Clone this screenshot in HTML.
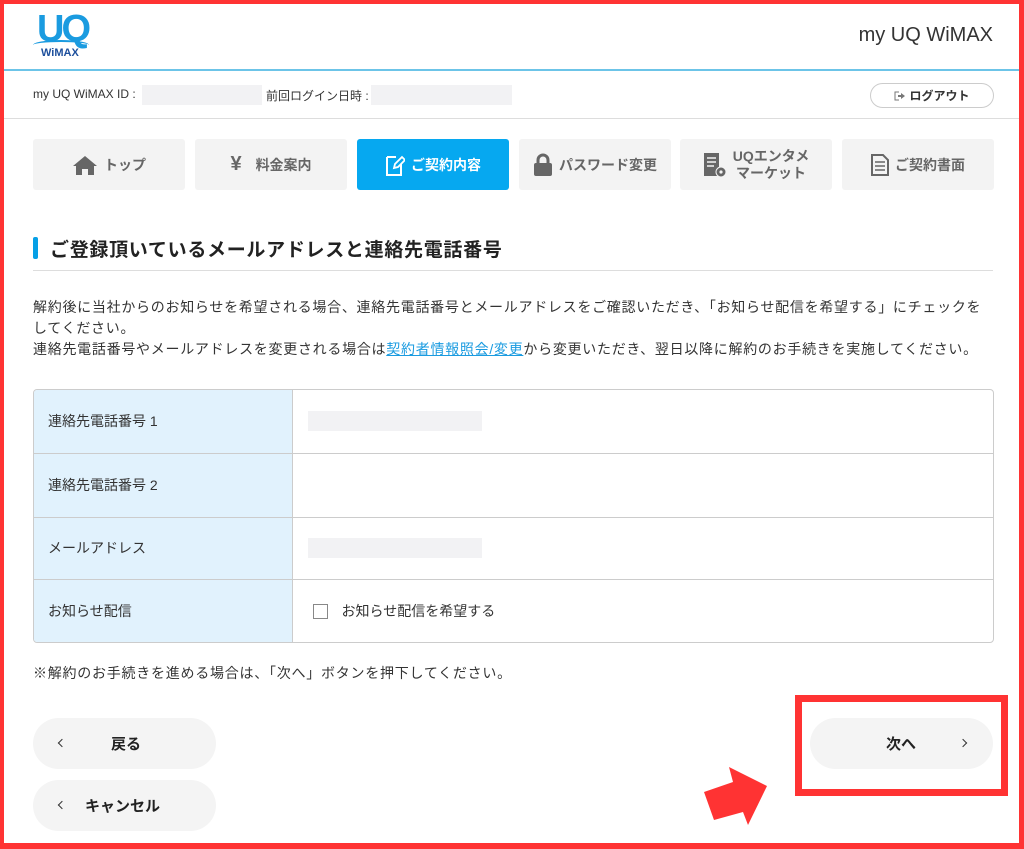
<!DOCTYPE html>
<html><head><meta charset="utf-8"><style>
*{margin:0;padding:0;box-sizing:border-box}
body{width:1024px;height:849px;background:#fff;font-family:"Liberation Sans","Noto Sans CJK JP",sans-serif;color:#333;position:relative;overflow:hidden}
.abs{position:absolute}
.frame{left:0;top:0;width:1024px;height:849px;border:4px solid #f33;border-bottom-width:6px;border-right-width:5px}
.nav{top:139px;width:152px;height:51px;background:#f3f3f3;border-radius:3px;display:flex;align-items:center;justify-content:center;font-size:14px;color:#666;font-weight:bold;gap:6px}
.nav.on{background:#06a8f0;color:#fff}
.gray{background:#f2f2f4}
.btn{width:183px;height:51px;background:#f4f4f4;border-radius:26px;font-size:15px;font-weight:bold;color:#222}
.chev{position:absolute;top:17px;width:7px;height:7px;border-left:1.5px solid #333;border-bottom:1.5px solid #333}
.row{left:33px;width:980px;font-size:14px}
td{border-bottom:1px solid #ccc}
</style></head><body>
<!-- logo -->
<div class="abs" style="left:33px;top:12px;width:60px;height:46px">
<div class="abs" style="left:4px;top:0;font:bold 38px 'Liberation Sans',sans-serif;color:#1a9be0;letter-spacing:-3px;line-height:34px">UQ</div>
<div class="abs" style="left:0;top:28px;width:56px;height:10px;border-top:2px solid #1a9be0;border-radius:50% 50% 0 0"></div>
<div class="abs" style="left:8px;top:35px;font:bold 11px 'Liberation Sans',sans-serif;color:#1d4f9c">WiMAX</div>
</div>
<div class="abs" style="right:31px;top:24px;font-size:20px;color:#333">my UQ WiMAX</div>
<div class="abs" style="left:0;top:69px;width:1024px;height:2px;background:#6cc4e8"></div>
<div class="abs" style="left:33px;top:87px;font-size:12px;color:#333">my UQ WiMAX ID :</div>
<div class="abs gray" style="left:142px;top:85px;width:120px;height:20px"></div>
<div class="abs" style="left:266px;top:87px;font-size:12px">前回ログイン日時 :</div>
<div class="abs gray" style="left:371px;top:85px;width:141px;height:20px"></div>
<div class="abs" style="left:870px;top:83px;width:124px;height:25px;border:1px solid #ccc;border-radius:13px;font-size:12px;font-weight:bold;display:flex;align-items:center;justify-content:center;gap:4px;color:#333"><svg width="11" height="10" viewBox="0 0 11 10"><path d="M5 1H1v8h4" stroke="#777" fill="none"/><path d="M4 4h3V2l4 3-4 3V6H4z" fill="#777"/></svg>ログアウト</div>
<div class="abs" style="left:0;top:118px;width:1024px;height:1px;background:#ddd"></div>
<!-- nav -->
<div class="abs nav" style="left:33px"><svg width="26" height="20" viewBox="0 0 26 20"><path d="M13 1L1 11h3v9h6v-6h6v6h6v-9h3z" fill="#666"/></svg>トップ</div>
<div class="abs nav" style="left:195px"><span style="font-size:20px;margin-right:8px">¥</span>料金案内</div>
<div class="abs nav on" style="left:357px"><svg width="20" height="22" viewBox="0 0 20 22"><path d="M2 3h9M2 3v18h14V10" stroke="#fff" stroke-width="2" fill="none"/><path d="M9 14l1-4 7-7 3 3-7 7z" stroke="#fff" stroke-width="1.8" fill="none"/></svg>ご契約内容</div>
<div class="abs nav" style="left:519px"><svg width="20" height="24" viewBox="0 0 20 24"><path d="M5 11V7a5 5 0 0110 0v4" stroke="#666" stroke-width="3" fill="none"/><rect x="1" y="10" width="18" height="13" rx="2" fill="#666"/></svg>パスワード変更</div>
<div class="abs nav" style="left:680px;line-height:17px"><svg width="24" height="26" viewBox="0 0 24 26"><rect x="1" y="1" width="15" height="23" fill="#666"/><path d="M4 6h9M4 10h9M4 14h7" stroke="#f3f3f3" stroke-width="1.5"/><circle cx="18" cy="20" r="5" fill="#666" stroke="#f3f3f3"/><circle cx="18" cy="20" r="1.6" fill="#f3f3f3"/></svg><span style="text-align:center">UQエンタメ<br>マーケット</span></div>
<div class="abs nav" style="left:842px"><svg width="18" height="22" viewBox="0 0 18 22"><path d="M1 1h11l5 5v15H1z" fill="none" stroke="#666" stroke-width="2"/><path d="M4 8h10M4 12h10M4 16h10" stroke="#666" stroke-width="1.5"/></svg>ご契約書面</div>
<!-- heading -->
<div class="abs" style="left:33px;top:237px;width:5px;height:22px;background:#06a0e6;border-radius:2px"></div>
<div class="abs" style="left:50px;top:235px;font-size:19px;font-weight:bold;color:#222;letter-spacing:0.7px">ご登録頂いているメールアドレスと連絡先電話番号</div>
<div class="abs" style="left:33px;top:270px;width:960px;height:1px;background:#ddd"></div>
<div class="abs row" style="top:297px;line-height:21px;white-space:nowrap;letter-spacing:0.72px">解約後に当社からのお知らせを希望される場合、連絡先電話番号とメールアドレスをご確認いただき、「お知らせ配信を希望する」にチェックを<br>してください。<br>連絡先電話番号やメールアドレスを変更される場合は<span style="color:#1a9be0;text-decoration:underline">契約者情報照会/変更</span>から変更いただき、翌日以降に解約のお手続きを実施してください。</div>
<!-- table -->
<div class="abs" style="left:33px;top:389px;width:961px;height:254px;border:1px solid #ccc;border-radius:4px;overflow:hidden">
<table style="border-collapse:collapse;width:100%;font-size:14px;color:#333">
<tr style="height:63px"><td style="width:258px;background:#e1f2fd;border-right:1px solid #ccc;padding-left:14px">連絡先電話番号 1</td><td style="padding-left:15px"><div class="gray" style="width:174px;height:20px"></div></td></tr>
<tr style="height:64px"><td style="background:#e1f2fd;border-right:1px solid #ccc;padding-left:14px">連絡先電話番号 2</td><td></td></tr>
<tr style="height:62px"><td style="background:#e1f2fd;border-right:1px solid #ccc;padding-left:14px">メールアドレス</td><td style="padding-left:15px"><div class="gray" style="width:174px;height:20px"></div></td></tr>
<tr style="height:63px"><td style="background:#e1f2fd;border-right:1px solid #ccc;padding-left:14px;border-bottom:none">お知らせ配信</td><td style="padding-left:20px;border-bottom:none"><span style="display:inline-block;width:15px;height:15px;border:1px solid #888;vertical-align:-3px;margin-right:14px"></span>お知らせ配信を希望する</td></tr>
</table></div>
<div class="abs row" style="top:663px;letter-spacing:0.75px">※解約のお手続きを進める場合は、「次へ」ボタンを押下してください。</div>
<!-- buttons -->
<div class="abs btn" style="left:33px;top:718px"><span class="chev" style="left:26px;top:22px;width:6px;height:6px;transform:rotate(45deg)"></span><span class="abs" style="left:78px;top:15px">戻る</span></div>
<div class="abs btn" style="left:33px;top:780px"><span class="chev" style="left:26px;top:22px;width:6px;height:6px;transform:rotate(45deg)"></span><span class="abs" style="left:52px;top:15px">キャンセル</span></div>
<div class="abs btn" style="left:810px;top:718px"><span class="abs" style="left:76px;top:15px">次へ</span><span class="chev" style="left:150px;top:22px;width:6px;height:6px;transform:rotate(-135deg)"></span></div>
<div class="abs" style="left:795px;top:695px;width:213px;height:101px;border:7px solid #f33"></div>
<svg class="abs" style="left:0;top:0" width="1024" height="849"><polygon points="729,767 767,786 748,825 743,812 714,820 704,792 733,782" fill="#f33"/></svg>
<div class="abs frame"></div>
</body></html>
